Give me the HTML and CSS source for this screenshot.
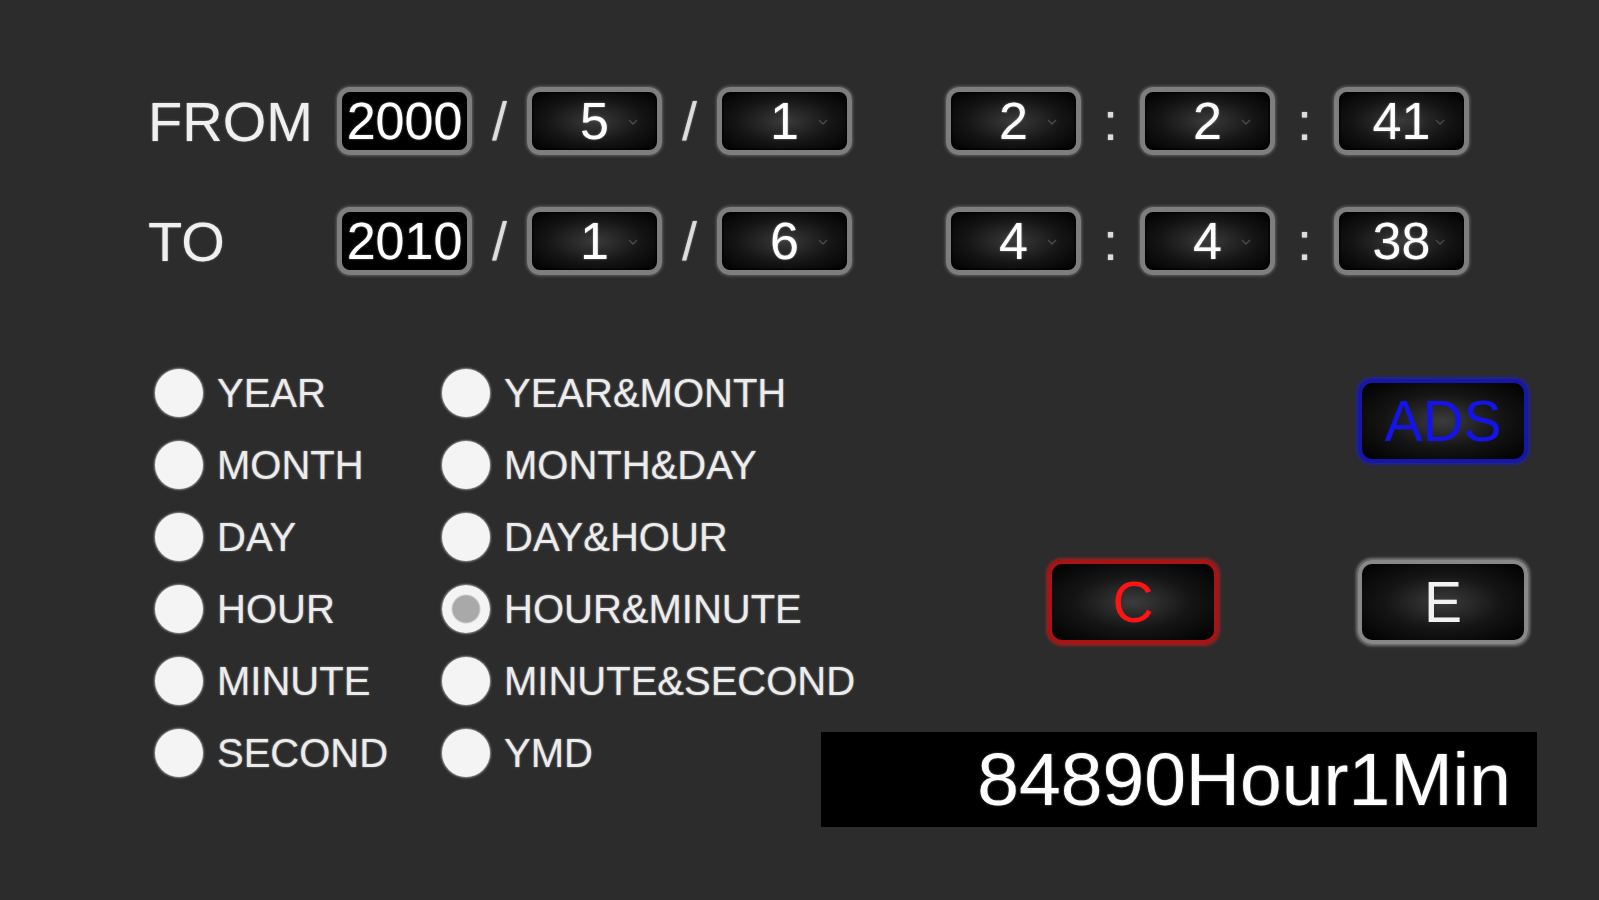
FILE: index.html
```html
<!DOCTYPE html>
<html lang="en">
<head>
  <meta charset="UTF-8">
  <meta name="viewport" content="width=device-width, initial-scale=1.0">
  <title>Time Difference</title>
  <link rel="stylesheet" href="styles.css">
</head>
<body>
  <div class="range">
    <div class="range-row">
      <span class="range-label">FROM</span>
      <div class="group">
        <input type="text" class="box year" value="2000">
        <span class="sep">/</span>
        <div class="pick">
          <select class="box"><option>5</option></select>
          <svg class="chev" width="10" height="6" viewBox="0 0 10 6"><polyline points="1,1 5,5 9,1" fill="none" stroke="#4a4a4a" stroke-width="1.4"/></svg>
        </div>
        <span class="sep">/</span>
        <div class="pick">
          <select class="box"><option>1</option></select>
          <svg class="chev" width="10" height="6" viewBox="0 0 10 6"><polyline points="1,1 5,5 9,1" fill="none" stroke="#4a4a4a" stroke-width="1.4"/></svg>
        </div>
      </div>
      <div class="group time">
        <div class="pick">
          <select class="box"><option>2</option></select>
          <svg class="chev" width="10" height="6" viewBox="0 0 10 6"><polyline points="1,1 5,5 9,1" fill="none" stroke="#4a4a4a" stroke-width="1.4"/></svg>
        </div>
        <span class="sep wide">:</span>
        <div class="pick">
          <select class="box"><option>2</option></select>
          <svg class="chev" width="10" height="6" viewBox="0 0 10 6"><polyline points="1,1 5,5 9,1" fill="none" stroke="#4a4a4a" stroke-width="1.4"/></svg>
        </div>
        <span class="sep wide">:</span>
        <div class="pick">
          <select class="box"><option>41</option></select>
          <svg class="chev" width="10" height="6" viewBox="0 0 10 6"><polyline points="1,1 5,5 9,1" fill="none" stroke="#4a4a4a" stroke-width="1.4"/></svg>
        </div>
      </div>
    </div>

    <div class="range-row">
      <span class="range-label">TO</span>
      <div class="group">
        <input type="text" class="box year" value="2010">
        <span class="sep">/</span>
        <div class="pick">
          <select class="box"><option>1</option></select>
          <svg class="chev" width="10" height="6" viewBox="0 0 10 6"><polyline points="1,1 5,5 9,1" fill="none" stroke="#4a4a4a" stroke-width="1.4"/></svg>
        </div>
        <span class="sep">/</span>
        <div class="pick">
          <select class="box"><option>6</option></select>
          <svg class="chev" width="10" height="6" viewBox="0 0 10 6"><polyline points="1,1 5,5 9,1" fill="none" stroke="#4a4a4a" stroke-width="1.4"/></svg>
        </div>
      </div>
      <div class="group time">
        <div class="pick">
          <select class="box"><option>4</option></select>
          <svg class="chev" width="10" height="6" viewBox="0 0 10 6"><polyline points="1,1 5,5 9,1" fill="none" stroke="#4a4a4a" stroke-width="1.4"/></svg>
        </div>
        <span class="sep wide">:</span>
        <div class="pick">
          <select class="box"><option>4</option></select>
          <svg class="chev" width="10" height="6" viewBox="0 0 10 6"><polyline points="1,1 5,5 9,1" fill="none" stroke="#4a4a4a" stroke-width="1.4"/></svg>
        </div>
        <span class="sep wide">:</span>
        <div class="pick">
          <select class="box"><option>38</option></select>
          <svg class="chev" width="10" height="6" viewBox="0 0 10 6"><polyline points="1,1 5,5 9,1" fill="none" stroke="#4a4a4a" stroke-width="1.4"/></svg>
        </div>
      </div>
    </div>
  </div>

  <div class="lower">
    <div class="modes">
      <label class="mode"><input type="radio" name="mode">YEAR</label>
      <label class="mode"><input type="radio" name="mode">YEAR&amp;MONTH</label>
      <label class="mode"><input type="radio" name="mode">MONTH</label>
      <label class="mode"><input type="radio" name="mode">MONTH&amp;DAY</label>
      <label class="mode"><input type="radio" name="mode">DAY</label>
      <label class="mode"><input type="radio" name="mode">DAY&amp;HOUR</label>
      <label class="mode"><input type="radio" name="mode">HOUR</label>
      <label class="mode"><input type="radio" name="mode" checked>HOUR&amp;MINUTE</label>
      <label class="mode"><input type="radio" name="mode">MINUTE</label>
      <label class="mode"><input type="radio" name="mode">MINUTE&amp;SECOND</label>
      <label class="mode"><input type="radio" name="mode">SECOND</label>
      <label class="mode"><input type="radio" name="mode">YMD</label>
    </div>

    <div class="panel">
      <div class="panel-row top">
        <button class="key ads">ADS</button>
      </div>
      <div class="panel-row keys">
        <button class="key clear">C</button>
        <button class="key exec">E</button>
      </div>
      <div class="result">84890Hour1Min</div>
    </div>
  </div>
</body>
</html>
```

FILE: styles.css
```css
body {
  margin: 0;
  padding: 0;
  background-color: #2c2c2c;
  font-family: "Liberation Sans", Arial, sans-serif;
  color: #eeeeee;
  min-height: 900px;
}

.range {
  display: flex;
  flex-direction: column;
  gap: 52px;
  padding: 87px 0 0 148px;
}
.range-row {
  display: flex;
  align-items: center;
  height: 68px;
}
.range-label {
  width: 189px;
  font-size: 56px;
  color: #f0f0f0;
  text-shadow: 0 0 2px rgba(200, 200, 200, 0.6);
}
.group {
  display: flex;
  align-items: center;
}
.group.time {
  margin-left: 94px;
}
.sep {
  width: 55px;
  text-align: center;
  font-size: 54px;
  color: #dddddd;
  text-shadow: 0 0 2px rgba(200, 200, 200, 0.6);
}
.sep.wide {
  width: 59px;
}

.pick {
  position: relative;
}
.box {
  box-sizing: border-box;
  width: 135px;
  height: 68px;
  margin: 0;
  padding: 0;
  border: 5px solid #7e7e7e;
  border-radius: 13px;
  box-shadow: 0 0 3px 1px rgba(150, 150, 150, 0.5), inset 0 0 2px 1px rgba(0, 0, 0, 0.9);
  background: radial-gradient(ellipse at center, #3a3a3a 0%, #141414 55%, #000000 100%);
  font-family: "Liberation Sans", Arial, sans-serif;
  font-size: 52px;
  color: #ffffff;
  text-align: center;
  text-align-last: center;
  appearance: none;
  -webkit-appearance: none;
  outline: none;
}
.box.year {
  background: #000000;
  text-shadow: 0 0 2px rgba(255, 255, 255, 0.5);
}
select.box {
  text-shadow: 0 0 2px rgba(255, 255, 255, 0.5);
}
.chev {
  position: absolute;
  right: 24px;
  top: 32px;
}

.lower {
  display: flex;
  padding: 82px 0 0 155px;
}
.modes {
  display: grid;
  grid-template-columns: 287px 379px;
  grid-auto-rows: 72px;
}
.mode {
  display: flex;
  align-items: center;
  gap: 14px;
  white-space: nowrap;
  font-size: 40px;
  color: #ececec;
  text-shadow: 0 0 2px rgba(200, 200, 200, 0.7);
}
.mode input {
  appearance: none;
  -webkit-appearance: none;
  flex-shrink: 0;
  margin: 0;
  width: 48px;
  height: 48px;
  border-radius: 50%;
  background: #f4f4f4;
  box-shadow: 0 0 2px 1px rgba(190, 190, 190, 0.7);
}
.mode input:checked {
  background: radial-gradient(circle, #a9a9a9 0, #a9a9a9 13px, #f4f4f4 15px);
}

.panel {
  width: 716px;
  display: flex;
  flex-direction: column;
}
.panel-row {
  display: flex;
  justify-content: flex-end;
  padding-right: 9px;
}
.panel-row.top {
  margin-top: 22px;
}
.panel-row.keys {
  margin-top: 97px;
  gap: 140px;
}
.key {
  box-sizing: border-box;
  width: 170px;
  height: 84px;
  border: 4px solid #888888;
  border-radius: 14px;
  background: radial-gradient(ellipse at center, #3c3c3c 0%, #151515 50%, #000000 100%);
  box-shadow: 0 0 3px 2px rgba(170, 170, 170, 0.6);
  font-family: "Liberation Sans", Arial, sans-serif;
  font-size: 57px;
  color: #f2f2f2;
  padding: 0;
  cursor: pointer;
}
.key.ads {
  border-color: #1616a8;
  box-shadow: 0 0 3px 2px rgba(30, 30, 210, 0.6);
  color: #1414e8;
}
.key.clear {
  border-color: #a81414;
  box-shadow: 0 0 3px 2px rgba(210, 30, 30, 0.6);
  color: #ff1414;
}
.result {
  margin-top: 88px;
  height: 95px;
  background-color: #000000;
  text-align: right;
  padding-right: 26px;
  font-size: 75px;
  line-height: 95px;
  color: #ffffff;
  text-shadow: 0 0 2px rgba(255, 255, 255, 0.5);
}
```
